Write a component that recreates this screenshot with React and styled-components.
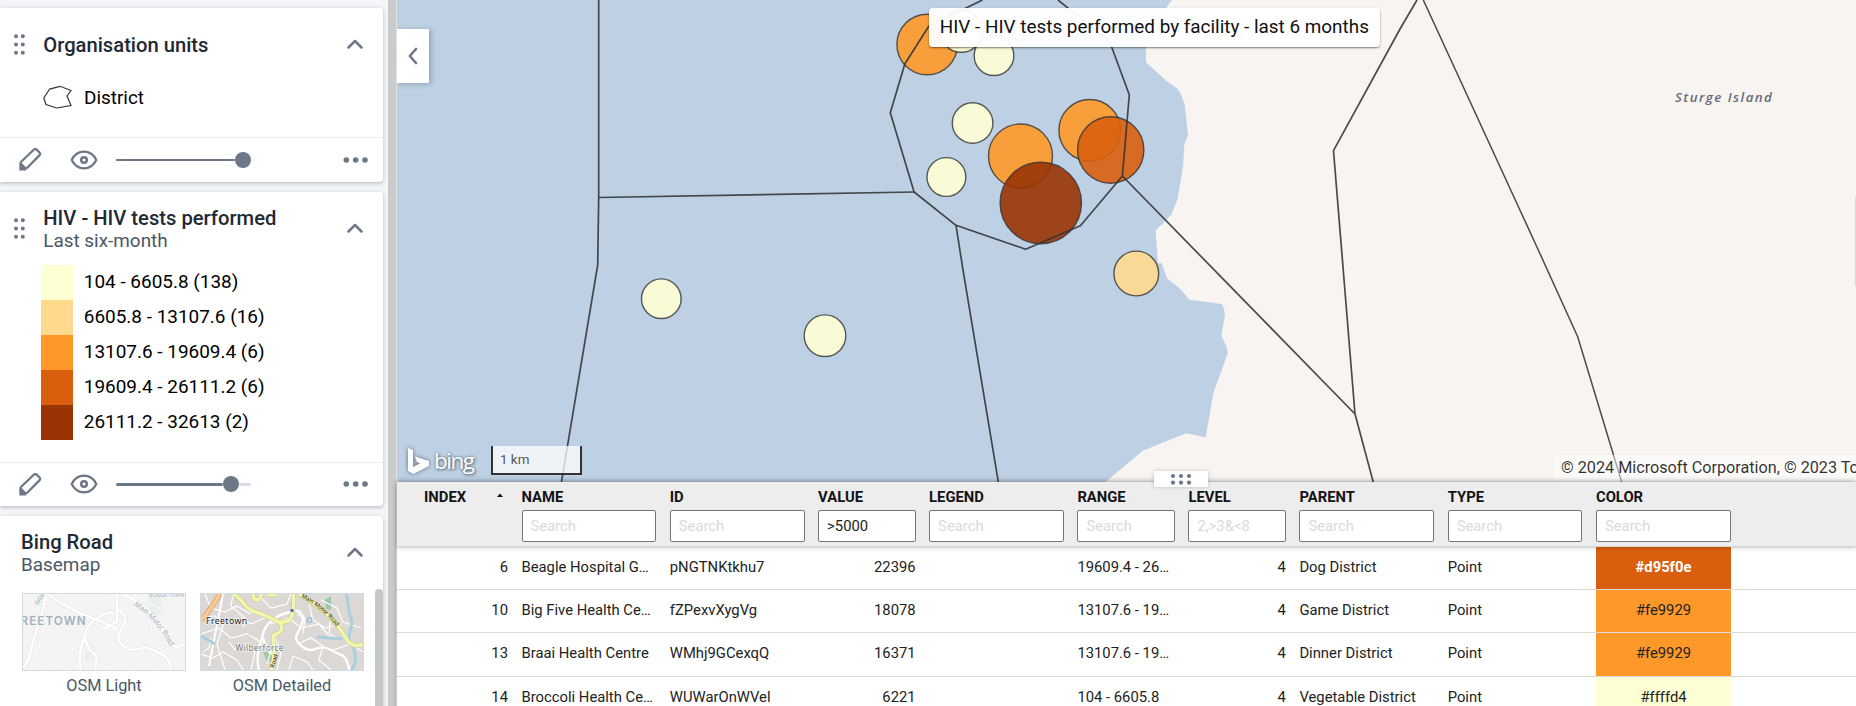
import React from 'react';
import styled, { createGlobalStyle } from 'styled-components';

const GlobalStyle = createGlobalStyle`
  * { box-sizing: border-box; }
  html, body { margin: 0; padding: 0; overflow: hidden; }
  body { font-family: Roboto, "Liberation Sans", sans-serif; background: #fff; color: #000; }
`;

const Page = styled.div`
  display: flex;
  width: 1856px;
  height: 706px;
  overflow: hidden;
`;

/* ---------- layers panel ---------- */

const Sidebar = styled.aside`
  flex: 0 0 388px;
  height: 706px;
  padding-top: 8px;
  display: flex;
  flex-direction: column;
  gap: 10px;
  background: #f3f5f7;
  overflow: hidden;
`;

const Divider = styled.div`
  flex: 0 0 9px;
  background: #cacbcd;
  border-right: 1px solid #e4e2df;
`;

const Card = styled.section`
  flex: none;
  display: flex;
  flex-direction: column;
  width: 383px;
  height: ${(p) => p.$height}px;
  background: #fff;
  border-radius: 0 4px 4px 0;
  box-shadow: 0 1px 4px rgba(64, 75, 90, 0.24), 0 2px 3px rgba(64, 75, 90, 0.1);
`;

const CardHeader = styled.header`
  display: flex;
  align-items: center;
  height: 73px;
  padding: 0 20px 0 ${(p) => (p.$plain ? 21 : 13)}px;
  flex: none;
`;

const Grip = styled.svg`
  flex: none;
  width: 13px;
  height: 23px;
  margin-right: 17.3px;
  fill: #6c7787;
`;

const Titles = styled.div`
  flex: 1;
  display: flex;
  flex-direction: column;
`;

const Title = styled.div`
  font-size: 20.2px;
  font-weight: 500;
  line-height: 24px;
  color: #212934;
`;

const Subtitle = styled.div`
  font-size: 18.9px;
  line-height: 21px;
  color: #4a5768;
`;

const Chevron = styled.svg`
  flex: none;
  width: 16px;
  height: 10px;
  margin-bottom: 1px;
  fill: none;
  stroke: #6c7787;
  stroke-width: 2.5;
  stroke-linecap: round;
  stroke-linejoin: round;
`;

const CardBody = styled.div`
  flex: 1;
  padding-left: ${(p) => p.$left}px;
`;

const UnitRow = styled.div`
  display: flex;
  align-items: center;
  gap: 12px;
  height: 32px;
  font-size: 18.9px;
`;

const LegendRow = styled.div`
  display: flex;
  align-items: center;
  height: 35px;
  gap: 10.8px;
  font-size: 18.95px;
  line-height: 33px;
`;

const LegendLabel = styled.span`
  padding-bottom: 2px;
`;

const Swatch = styled.span`
  width: 32px;
  height: 35px;
  background: ${(p) => p.$color};
`;

const Toolbar = styled.footer`
  flex: none;
  display: flex;
  align-items: center;
  height: ${(p) => p.$height}px;
  padding: 0 15.5px 1px 19px;
  border-top: 1px solid #e8edf2;
`;

const Pencil = styled.svg`
  width: 23px;
  height: 23px;
  margin-right: 28.3px;
`;

const Eye = styled.svg`
  width: 28px;
  height: 20px;
  margin-right: 17.7px;
`;

const Slider = styled.div`
  display: flex;
  align-items: center;
  width: 135px;
  height: 16px;
`;

const Track = styled.span`
  width: ${(p) => p.$width}px;
  height: ${(p) => (p.$thin ? 2 : 3)}px;
  border-radius: 2px;
  background: ${(p) => (p.$rest ? '#d5dde5' : '#6c7787')};
`;

const Thumb = styled.span`
  width: 16px;
  height: 16px;
  border-radius: 50%;
  background: #6c7787;
`;

const More = styled.svg`
  width: 25px;
  height: 8px;
  margin-left: auto;
  fill: #6c7787;
`;

const BasemapArea = styled.div`
  display: flex;
  justify-content: space-between;
  padding-left: 22px;
  height: 120px;
`;

const BasemapList = styled.div`
  display: flex;
  gap: 14px;
  padding-top: 4px;
`;

const Basemap = styled.figure`
  width: 164px;
  margin: 0;
  text-align: center;
  font-size: 16.3px;
  line-height: 20px;
  color: #4a5768;
`;

const Preview = styled.svg`
  display: block;
  width: 164px;
  height: 78px;
  margin-bottom: 5px;
  border: 1px solid #d0dae3;
`;

const ScrollThumb = styled.div`
  width: 8px;
  height: 130px;
  border-radius: 4px 4px 0 0;
  background: #c6c7c8;
`;

/* ---------- map ---------- */

const Main = styled.main`
  flex: 1;
  min-width: 0;
  display: flex;
  flex-direction: column;
`;

const MapArea = styled.section`
  position: relative;
  flex: 0 0 482px;
  overflow: hidden;
  background: #bdd0e4;
`;

const MapCanvas = styled.svg`
  display: block;
  width: 1459px;
  height: 482px;
`;

const MapLabel = styled.text`
  font: italic 600 13.3px "Open Sans", sans-serif;
  letter-spacing: 1.1px;
  fill: #676a7a;
`;

const Collapse = styled.button`
  position: absolute;
  left: 0;
  top: 29px;
  width: 32px;
  height: 54px;
  padding: 0;
  border: 0;
  display: grid;
  place-items: center;
  background: #fff;
  box-shadow: 2px 1px 5px rgba(60, 75, 95, 0.35);
`;

const Tooltip = styled.div`
  position: absolute;
  left: 532px;
  top: 8px;
  height: 39px;
  width: 451px;
  padding-left: 10.7px;
  border-radius: 4px;
  background: rgba(255, 255, 255, 0.95);
  box-shadow: 0 1px 2px rgba(0, 0, 0, 0.5);
  color: #111;
  font-size: 18.9px;
  line-height: 37px;
  white-space: nowrap;
`;

const MapFooter = styled.div`
  position: absolute;
  left: 10px;
  right: 0;
  bottom: 0;
  display: flex;
  align-items: flex-end;
`;

const Bing = styled.div`
  display: flex;
  align-items: center;
  gap: 4px;
  width: 84px;
  height: 36px;
  margin-bottom: 3px;
  color: #fff;
  font: 400 22.5px/30px "Open Sans", sans-serif;
  letter-spacing: -1.5px;
  text-shadow: 0 0 3px #65717e, 1px 1px 3px #65717e;
  svg { filter: drop-shadow(0 0 2px #5c6672); flex: none; }
  span { display: block; }
`;

const Scale = styled.div`
  width: 91px;
  height: 29px;
  margin-bottom: 7px;
  padding-left: 7px;
  border: 2px solid #333;
  border-top: 0;
  background: rgba(255, 255, 255, 0.75);
  color: #555;
  font-size: 13.4px;
  line-height: 27px;
`;

const Attribution = styled.div`
  width: 302px;
  height: 27px;
  margin-left: auto;
  padding-left: 7px;
  white-space: nowrap;
  background: rgba(255, 255, 255, 0.5);
  color: rgba(0, 0, 0, 0.82);
  font-size: 16.2px;
  line-height: 26px;
`;

const EdgeHandle = styled.div`
  position: absolute;
  right: 0;
  top: 197px;
  width: 1px;
  height: 89px;
  background: #dcdad8;
`;

/* ---------- data table ---------- */

const Table = styled.section`
  position: relative;
  flex: 1;
  background: #fff;
  box-shadow: 0 -1px 5px rgba(0, 0, 0, 0.28);
`;

const ResizeHandle = styled.div`
  position: absolute;
  z-index: 2;
  left: 757px;
  top: -11px;
  width: 54px;
  height: 16px;
  background: #fff;
  box-shadow: 0 0 4px rgba(0, 0, 0, 0.2);
  svg { display: block; fill: #6c7787; }
`;

const columns = `84px 134.8px 134.8px 97.5px 134.8px 97.5px 97.5px 134.8px 134.8px 135px`;

const HeadRow = styled.div`
  position: relative;
  z-index: 1;
  display: grid;
  grid-template-columns: ${columns};
  column-gap: 13.5px;
  height: 65px;
  padding: 5px 0 0 27px;
  background: #ededed;
  border-bottom: 1px solid #d5d5d5;
  box-shadow: 0 1px 4px rgba(0, 0, 0, 0.22);
`;

const HeadCell = styled.div`
  display: flex;
  flex-direction: column;
  gap: 3px;
  min-width: 0;
  font-size: 14.8px;
  font-weight: 700;
  line-height: 20px;
  color: #141414;
`;

const IndexLabel = styled.div`
  display: flex;
  justify-content: space-between;
  padding-right: 5px;
  svg { margin-top: 6px; }
`;

const Filter = styled.input`
  width: 100%;
  height: 32px;
  padding: 0 8px;
  border: 1px solid #777;
  border-radius: 2px;
  background: #fff;
  color: #222;
  outline: none;
  font: 14.8px Roboto, sans-serif;
  &::placeholder { color: #dadada; opacity: 1; }
`;

const BodyRow = styled.div`
  display: grid;
  grid-template-columns: ${columns};
  column-gap: 13.5px;
  align-items: stretch;
  height: ${(p) => p.$height}px;
  padding-left: 27px;
  border-bottom: 1px solid #dadada;
`;

const Cell = styled.div`
  white-space: nowrap;
  text-align: ${(p) => (p.$num ? 'right' : 'left')};
  font-size: 14.8px;
  line-height: 41.5px;
  color: #222;
`;

const ColorCell = styled(Cell)`
  text-align: center;
  background: ${(p) => p.$color};
  color: ${(p) => (p.$light ? '#fff' : '#222')};
  font-weight: ${(p) => (p.$light ? 700 : 400)};
`;

const LEGEND = [
  ['#ffffd4', '104 - 6605.8 (138)'],
  ['#fed98e', '6605.8 - 13107.6 (16)'],
  ['#fe9929', '13107.6 - 19609.4 (6)'],
  ['#d95f0e', '19609.4 - 26111.2 (6)'],
  ['#993404', '26111.2 - 32613 (2)'],
];

const BUBBLES = [
  [927.2, 44.5, 30.3, '#fe9929'],
  [961.2, 31.3, 21, '#ffffd4'],
  [994, 55.7, 19.8, '#ffffd4'],
  [972.6, 123, 20.3, '#ffffd4'],
  [946.4, 177, 19.4, '#ffffd4'],
  [1020.5, 156, 32, '#fe9929'],
  [1089.7, 130.3, 30.8, '#fe9929'],
  [1110.7, 150, 33.2, '#d95f0e'],
  [1040.8, 203, 40.7, '#993404'],
  [1136.3, 273.5, 22.4, '#fed98e'],
  [661.3, 298.7, 19.8, '#ffffd4'],
  [825, 335.7, 20.8, '#ffffd4'],
];

const HEADERS = [
  ['NAME', 'Search'], ['ID', 'Search'], ['VALUE', 'Search', '>5000'], ['LEGEND', 'Search'],
  ['RANGE', 'Search'], ['LEVEL', '2,>3&<8'], ['PARENT', 'Search'], ['TYPE', 'Search'], ['COLOR', 'Search'],
];

const ROWS = [
  [43, '6', 'Beagle Hospital G…', 'pNGTNKtkhu7', '22396', '19609.4 - 26…', 'Dog District', '#d95f0e', true],
  [43, '10', 'Big Five Health Ce…', 'fZPexvXygVg', '18078', '13107.6 - 19…', 'Game District', '#fe9929'],
  [44, '13', 'Braai Health Centre', 'WMhj9GCexqQ', '16371', '13107.6 - 19…', 'Dinner District', '#fe9929'],
  [43, '14', 'Broccoli Health Ce…', 'WUWarOnWVel', '6221', '104 - 6605.8', 'Vegetable District', '#ffffd4'],
];

const GripIcon = () => (
  <Grip viewBox="0 0 13 23">
    {[3.3, 11.5, 19.7].map((y) => [3, 9.8].map((x) => <circle key={`${x}-${y}`} cx={x} cy={y} r="2" />))}
  </Grip>
);

const Up = () => (
  <Chevron viewBox="0 0 16 10"><path d="M1.5 8.5 8 2l6.500 6.500" /></Chevron>
);

function LayerToolbar({ height, done, rest }) {
  return (
    <Toolbar $height={height}>
      <Pencil viewBox="0 0 23 23" fill="none">
        <path d="M1.400 14.500 15 1.500q1.300-1 2.600.2L20.500 4.500q1.200 1.300.1 2.600L7.500 20.500" stroke="#6c7787" strokeWidth="2.300" strokeLinejoin="round" />
        <path d="M0.300 14 2.900 15.200 7.500 19.800 7.300 22.500H0.300Z" fill="#6c7787" />
      </Pencil>
      <Eye viewBox="0 0 28 20" fill="none" stroke="#6c7787">
        <path d="M1.700 10C4.500 4.400 8.800 1.700 14 1.700S23.500 4.400 26.300 10C23.500 15.600 19.200 18.300 14 18.300S4.500 15.600 1.700 10Z" strokeWidth="2.300" strokeLinejoin="round" />
        <circle cx="14" cy="10" r="2.800" strokeWidth="2.500" />
      </Eye>
      <Slider>
        <Track $width={done} $thin={!rest} />
        <Thumb />
        {rest ? <Track $width={rest} $rest /> : null}
      </Slider>
      <More viewBox="0 0 25 8">
        <circle cx="3.300" cy="4" r="2.800" /><circle cx="12.700" cy="4" r="2.800" /><circle cx="22" cy="4" r="2.800" />
      </More>
    </Toolbar>
  );
}

const MINOR = [
  'M0 40 18 34 30 44 46 40 60 48', 'M4 0 10 14 24 18 36 12 50 20', 'M0 24 14 22 22 32 16 50 24 76',
  'M50 76 54 58 44 50 34 56 28 48', 'M70 30 88 24 100 34 118 30 130 44', 'M108 10 112 26 124 34 140 30',
  'M96 50 110 44 122 52 118 66 130 76', 'M132 56 150 50 162 58', 'M60 4 70 14 86 10 90 0', 'M120 6 136 14 142 28 160 34',
  'M0 60 12 64 22 58 36 66 42 76', 'M74 44 80 60 76 76', 'M88 76 92 62 106 68 112 76', 'M142 60 150 76', 'M40 24 50 30 64 24',
  'M62 48 70 56 66 70', 'M96 20 104 24 102 40', 'M130 20 128 40 140 46', 'M10 44 8 54 2 58', 'M32 0 30 12 44 24 42 34',
];

const MAJOR = [
  'M22 0C24 14 10 40 8 56S2 68 0 74', 'M24 0 40 10 58 20 80 28 94 36', 'M94 0 94 28 78 36',
  'M94 16C108 20 100 32 96 40S104 56 110 56 120 50 130 56 146 60 148 76', 'M90 18C76 20 64 30 62 40S54 60 58 76',
  'M62 44 66 56 74 62 72 76', 'M100 0C124 12 134 24 142 40S154 54 162 50',
];

function OsmLight() {
  return (
    <Preview viewBox="0 0 162 76">
      <rect width="162" height="76" fill="#f4f4f3" />
      <path d="M64 50 72 52 70 68 62 66ZM126 4 138 2 140 20 128 24Z" fill="#e9efec" />
      {MINOR.map((d) => <path key={d} d={d} fill="none" stroke="#e4e5e5" strokeWidth="2" />)}
      {MINOR.map((d) => <path key={d} d={d} fill="none" stroke="#fff" strokeWidth="1.100" />)}
      {MAJOR.map((d) => <path key={d} d={d} fill="none" stroke="#e2e3e3" strokeWidth="3.600" />)}
      {MAJOR.map((d) => <path key={d} d={d} fill="none" stroke="#fff" strokeWidth="2.600" />)}
      <defs><path id="light-road" d="M111 11C128 23 140 36 149 56" /></defs>
      <g fill="#a4b1bd" fontFamily="Inter, sans-serif">
        <text x="-2.500" y="31" fontSize="11.700" fontWeight="600" textLength="65">REETOWN</text>
        <text fontSize="6.900"><textPath href="#light-road">Main Motor Road</textPath></text>
        <text x="126" y="2.500" fontSize="5">BONGA TOWN</text>
        <text x="15" y="12" fontSize="6.500" transform="rotate(-58 15 12)">Wils</text>
      </g>
    </Preview>
  );
}

const YELLOW_ROADS = [
  'M32 0C44 6 42 14 52 17S70 24 74 26 82 30 80 36 72 38 72 44 76 60 70 76',
  'M92 0C94 12 92 28 84 28S76 28 74 26',
  'M52 0C52 8 60 8 60 0M66 0Q72 2 76 0',
  'M98 0C116 10 134 26 141 38S152 54 162 50',
];

function OsmDetailed() {
  return (
    <Preview viewBox="0 0 162 76">
      <rect width="162" height="76" fill="#dbd8d6" />
      <path d="M124 6 130 2 130 16 125 15ZM62 58 70 56 72 66 66 68Z" fill="#9fc8a6" />
      {MINOR.map((d) => <path key={d} d={d} fill="none" stroke="#fff" strokeWidth="1.200" />)}
      <path d="M8 6 12 20M34 50 40 66M104 62 112 70M128 40 122 48M84 6 90 10M48 40 52 52" stroke="#e4b8b0" strokeWidth="1.200" strokeDasharray="1 4" />
      {MAJOR.slice(3, 6).map((d) => <path key={d} d={d} fill="none" stroke="#fff" strokeWidth="2.400" />)}
      <path d="M22 0 8 72" stroke="#fff" strokeWidth="2" />
      <path d="M145 0C149 10 146 16 150 24S144 40 150 50 156 70 150 76M116 43 142 45M0 42 14 50" fill="none" stroke="#a9d0dc" strokeWidth="3" />
      <circle cx="108.500" cy="26" r="2.300" fill="none" stroke="#8fc3e0" strokeWidth="1.400" />
      <path d="M0 26C8 18 14 8 19 0" fill="none" stroke="#c98a55" strokeWidth="5" />
      <path d="M0 26C8 18 14 8 19 0" fill="none" stroke="#f9ca92" strokeWidth="4" />
      {YELLOW_ROADS.map((d) => <path key={d} d={d} fill="none" stroke="#c5c878" strokeWidth="4.400" />)}
      {YELLOW_ROADS.map((d) => <path key={d} d={d} fill="none" stroke="#f2f5ab" strokeWidth="3.500" />)}
      <rect x="89.500" y="15" width="3" height="3" fill="#5570b8" />
      <defs><path id="detail-road" d="M100 3C115 11 128 22 138 36" /></defs>
      <g fontFamily='"Noto Sans", sans-serif' stroke="#fff" strokeOpacity=".6" strokeWidth="1.600" paintOrder="stroke">
        <text x="5" y="30" fontSize="8.700" textLength="41" fill="#222">Freetown</text>
        <text x="34.500" y="57" fontSize="8.300" textLength="48" fill="#777">Wilberforce</text>
        <text fontSize="5.700" fill="#222" strokeWidth="0"><textPath href="#detail-road">Main Motor Road</textPath></text>
        <text x="73" y="74" fontSize="5.700" fill="#222" strokeWidth="0" transform="rotate(-75 73 74)">Road</text>
      </g>
    </Preview>
  );
}

function MapView() {
  return (
    <MapArea>
      <MapCanvas viewBox="397 0 1459 482">
        <path
          fill="#f7f4f1"
          d="M1172 0 1166 8 1155 26 1146 47V62.300L1166.500 81 1177 88.500Q1180 91 1182 97L1184.800 105 1188 135 1184.400 144 1183 166.700 1177.500 199.300 1171.700 214Q1168 219 1155.600 230.300L1158 263.300H1161.700L1167 278.300 1180 288.700 1189.300 299.700 1221.700 304Q1223.500 305 1225 315L1221.300 335.700 1226.500 346.500Q1228 351 1227.500 354L1213.300 393.300 1205.700 437.300 1186 433.300 1142.700 450.700 1105.500 482H1856V0Z"
        />
        <g stroke="#333" strokeOpacity="0.8" strokeWidth="1.400">
          {BUBBLES.map(([x, y, r, c]) => <circle key={`${x}`} cx={x} cy={y} r={r} fill={c} fillOpacity="0.9" />)}
        </g>
        <g fill="none" stroke="#333" strokeOpacity="0.88" strokeWidth="1.700" strokeLinejoin="round">
          <path d="M598.700 0V197.400L597.700 265 561.300 483" />
          <path d="M598.700 197.500 914.100 192" />
          <path d="M982.500 0 928.900 26 904.800 64 890.300 112.700 914.100 192 956 225.300 1025.700 249.300 1080.400 225.700 1122.400 176 1129.300 94.700 1109.700 41.700 1058 0" />
          <path d="M956 225.300 963 270 998.500 483" />
          <path d="M1122.400 176 1355 414 1373.500 483M1355 414 1333.500 150.700 1400 29 1417 0" />
          <path d="M1423.300 0 1538.300 250 1577.700 336.700 1622 483" strokeWidth="1.500" />
        </g>
        <MapLabel x="1675" y="102" textLength="98">Sturge Island</MapLabel>
      </MapCanvas>
      <Collapse aria-label="Collapse panel">
        <svg width="10" height="18" viewBox="0 0 10 18" fill="none" stroke="#6c7787" strokeWidth="2.600" strokeLinecap="round" strokeLinejoin="round">
          <path d="M8 2 1.800 9 8 16" />
        </svg>
      </Collapse>
      <Tooltip>HIV - HIV tests performed by facility - last 6 months</Tooltip>
      <MapFooter>
        <Bing>
          <svg width="23" height="28" viewBox="0 0 23 28">
            <path d="M1 1 6 3V20L13 16.500 10 15 8 9.500 22 14V19L6.500 27 1 24Z" fill="#fff" />
          </svg>
          <span>bing</span>
        </Bing>
        <Scale>1 km</Scale>
        <Attribution>© 2024 Microsoft Corporation, © 2023 To</Attribution>
      </MapFooter>
      <EdgeHandle />
    </MapArea>
  );
}

function DataTable() {
  return (
    <Table>
      <ResizeHandle>
        <svg width="54" height="16">
          {[19, 27, 35].map((x) => [5, 11.700].map((y) => <circle key={`${x}-${y}`} cx={x} cy={y} r="2.100" />))}
        </svg>
      </ResizeHandle>
      <HeadRow>
        <HeadCell>
          <IndexLabel>
            INDEX
            <svg width="6" height="4"><path d="M0 4 3 0.500 6 4Z" fill="#111" /></svg>
          </IndexLabel>
        </HeadCell>
        {HEADERS.map(([label, hint, value]) => (
          <HeadCell key={label}>
            {label}
            <Filter placeholder={hint} defaultValue={value} />
          </HeadCell>
        ))}
      </HeadRow>
      {ROWS.map(([height, index, name, id, value, range, parent, color, light]) => (
        <BodyRow key={index} $height={height}>
          <Cell $num>{index}</Cell>
          <Cell>{name}</Cell>
          <Cell>{id}</Cell>
          <Cell $num>{value}</Cell>
          <Cell />
          <Cell>{range}</Cell>
          <Cell $num>4</Cell>
          <Cell>{parent}</Cell>
          <Cell>Point</Cell>
          <ColorCell $color={color} $light={light}>{color}</ColorCell>
        </BodyRow>
      ))}
    </Table>
  );
}

export default function App() {
  return (
    <Page>
      <GlobalStyle />
      <Sidebar>
        <Card $height={174}>
          <CardHeader>
            <GripIcon />
            <Titles><Title>Organisation units</Title></Titles>
            <Up />
          </CardHeader>
          <CardBody $left={43}>
            <UnitRow>
              <svg width="29" height="24" viewBox="0 0 29 24" fill="none" stroke="#333" strokeWidth="1.200">
                <path d="M6.500 4.200 17 1.300 28 5.500 24 11 28 20.500 13.500 23 3 19.500 0.800 13Z" />
              </svg>
              District
            </UnitRow>
          </CardBody>
          <LayerToolbar height={45} done={119} />
        </Card>
        <Card $height={314}>
          <CardHeader>
            <GripIcon />
            <Titles>
              <Title>HIV - HIV tests performed</Title>
              <Subtitle>Last six-month</Subtitle>
            </Titles>
            <Up />
          </CardHeader>
          <CardBody $left={41}>
            {LEGEND.map(([color, label]) => (
              <LegendRow key={label}>
                <Swatch $color={color} />
                <LegendLabel>{label}</LegendLabel>
              </LegendRow>
            ))}
          </CardBody>
          <LayerToolbar height={44} done={107} rest={12} />
        </Card>
        <Card $height={220}>
          <CardHeader $plain>
            <Titles>
              <Title>Bing Road</Title>
              <Subtitle>Basemap</Subtitle>
            </Titles>
            <Up />
          </CardHeader>
          <BasemapArea>
            <BasemapList>
              <Basemap><OsmLight />OSM Light</Basemap>
              <Basemap><OsmDetailed />OSM Detailed</Basemap>
            </BasemapList>
            <ScrollThumb />
          </BasemapArea>
        </Card>
      </Sidebar>
      <Divider />
      <Main>
        <MapView />
        <DataTable />
      </Main>
    </Page>
  );
}
